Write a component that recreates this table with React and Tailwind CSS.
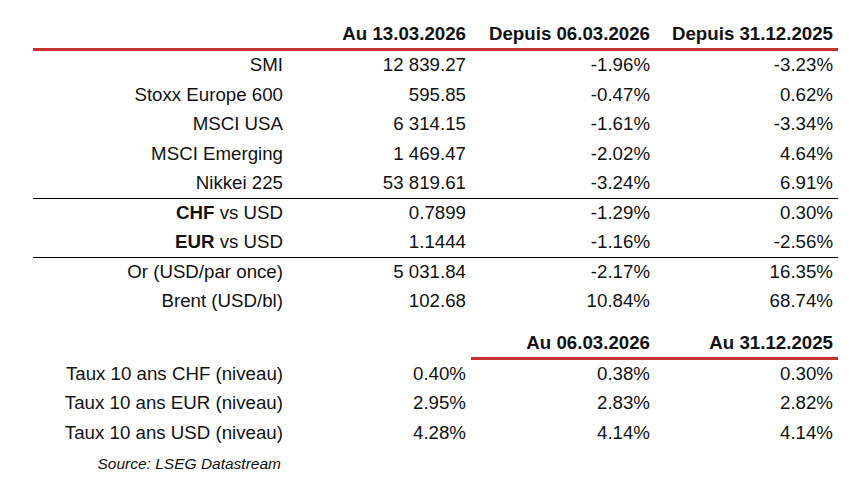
const MAIN = [
  { label: 'SMI', v: ['12 839.27', '-1.96%', '-3.23%'] },
  { label: 'Stoxx Europe 600', v: ['595.85', '-0.47%', '0.62%'] },
  { label: 'MSCI USA', v: ['6 314.15', '-1.61%', '-3.34%'] },
  { label: 'MSCI Emerging', v: ['1 469.47', '-2.02%', '4.64%'] },
  { label: 'Nikkei 225', v: ['53 819.61', '-3.24%', '6.91%'], line: true },
  { label: <><b>CHF</b> vs USD</>, v: ['0.7899', '-1.29%', '0.30%'] },
  { label: <><b>EUR</b> vs USD</>, v: ['1.1444', '-1.16%', '-2.56%'], line: true },
  { label: 'Or (USD/par once)', v: ['5 031.84', '-2.17%', '16.35%'] },
  { label: 'Brent (USD/bl)', v: ['102.68', '10.84%', '68.74%'] },
]

const RATES = [
  { label: 'Taux 10 ans CHF (niveau)', v: ['0.40%', '0.38%', '0.30%'] },
  { label: 'Taux 10 ans EUR (niveau)', v: ['2.95%', '2.83%', '2.82%'] },
  { label: 'Taux 10 ans USD (niveau)', v: ['4.28%', '4.14%', '4.14%'] },
]

const cols = 'grid grid-cols-[255px_183px_184px_183px]'

function Row({ row }) {
  return (
    <div className={`${cols} h-[29.5px] items-center ${row.line ? 'border-b border-black' : ''}`}>
      <div className="text-right pr-[5px] whitespace-nowrap">{row.label}</div>
      {row.v.map((x, i) => (
        <div key={i} className="text-right pr-[5px]">{x}</div>
      ))}
    </div>
  )
}

export default function App() {
  return (
    <div className="w-[864px] h-[491px] bg-white text-[#111] text-[18.7px] leading-none overflow-hidden"
      style={{ fontFamily: '"Liberation Sans", Arial, sans-serif' }}>
      <div className="ml-[33px] w-[805px]">
        {/* top header */}
        <div className={`${cols} h-[48px] items-end pb-[4px] font-bold`}>
          <div />
          <div className="text-right pr-[5px]">Au 13.03.2026</div>
          <div className="text-right pr-[5px]">Depuis 06.03.2026</div>
          <div className="text-right pr-[5px]">Depuis 31.12.2025</div>
        </div>
        <div className="h-[3px] bg-[#c8312c]" />

        {MAIN.map((r, i) => <Row key={i} row={r} />)}

        {/* rates header */}
        <div className={`${cols} h-[40px] items-end pb-[4px] font-bold`}>
          <div />
          <div />
          <div className="text-right pr-[5px]">Au 06.03.2026</div>
          <div className="text-right pr-[5px]">Au 31.12.2025</div>
        </div>
        <div className="flex">
          <div className="w-[438px]" />
          <div className="h-[3px] w-[367px] bg-[#c8312c]" />
        </div>

        {RATES.map((r, i) => <Row key={i} row={r} />)}

        <div className="w-[255px] h-[32px] flex items-center justify-end pr-[7px] italic text-[15.5px]">
          Source: LSEG Datastream
        </div>
      </div>
    </div>
  )
}
